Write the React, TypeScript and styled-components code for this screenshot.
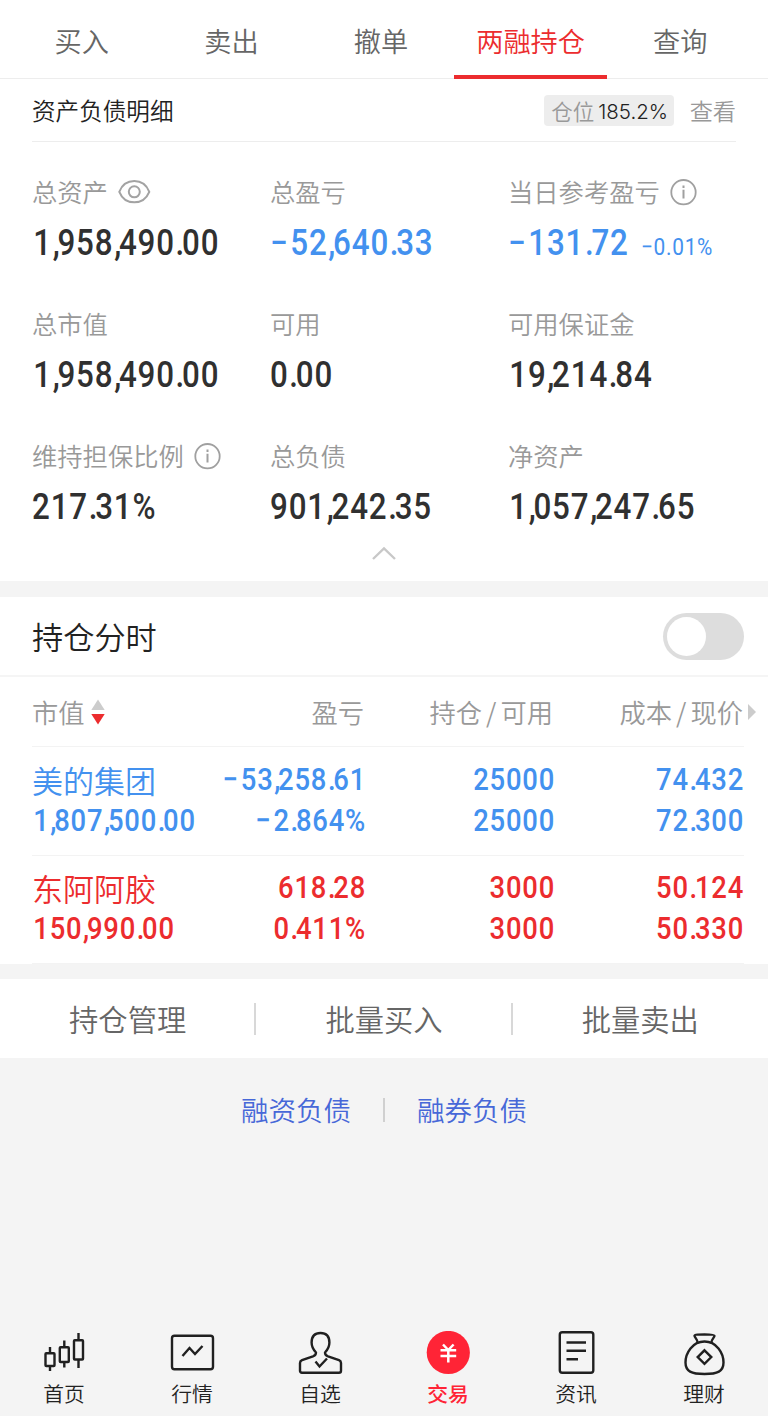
import React from "react";
import styled, { createGlobalStyle } from "styled-components";

const BLUE = "#4391ef";
const RED = "#ec2c2e";
const INK = "#303030";

const GlobalStyle = createGlobalStyle`
  *, *::before, *::after { box-sizing: border-box; }
  body {
    margin: 0;
    background: #f4f4f4;
    font-family: "Noto Sans CJK SC", sans-serif;
    font-weight: 350;
    color: #222;
  }
`;

const Page = styled.div`
  width: 768px;
  height: 1416px;
  display: flex;
  flex-direction: column;
  overflow: hidden;
  white-space: nowrap;
`;

const Tabs = styled.nav`
  height: 79px;
  flex: none;
  display: flex;
  padding: 0 13px 0 7px;
  background: #fff;
  border-bottom: 1px solid #ededed;
`;

const Tab = styled.div<{ $active?: boolean }>`
  position: relative;
  flex: 1;
  height: 79px;
  line-height: 80px;
  text-align: center;
  font-size: 27.2px;
  color: ${(p) => (p.$active ? RED : "#666")};
  &::after {
    content: "";
    display: ${(p) => (p.$active ? "block" : "none")};
    position: absolute;
    left: -2px;
    right: -2px;
    bottom: 0;
    height: 4px;
    background: ${RED};
  }
`;

const Summary = styled.section`
  height: 502px;
  flex: none;
  padding: 0 32px;
  background: #fff;
`;

const SummaryHead = styled.header`
  display: flex;
  align-items: center;
  height: 63px;
  border-bottom: 1px solid #ededed;
`;

const SummaryTitle = styled.h1`
  flex: 1;
  margin: 0;
  font-size: 23.6px;
  font-weight: 350;
  line-height: 32px;
`;

const Badge = styled.span`
  display: flex;
  align-items: center;
  justify-content: center;
  gap: 4px;
  width: 130px;
  height: 31px;
  margin: 1px 16px 0 0;
  padding-left: 2px;
  border-radius: 4px;
  background: #ededed;
  color: #999;
  font-size: 21.5px;
  line-height: 30px;
`;

const BadgeValue = styled.span`
  padding-top: 2px;
  font-family: Inter, sans-serif;
  font-size: 20.5px;
  font-weight: 300;
  color: #222;
`;

const More = styled.span`
  font-size: 23.2px;
  line-height: 32px;
  color: #999;
`;

const Grid = styled.div`
  display: grid;
  grid-template-columns: 238px 238px 1fr;
  grid-auto-rows: 132px;
  padding-top: 30px;
  height: 400px;
`;

const Label = styled.div`
  display: flex;
  align-items: center;
  height: 40px;
  gap: 10px;
  font-size: 25.3px;
  color: #999;
`;

const LabelText = styled.span`
  padding-bottom: 3px;
`;

const Figure = styled.div<{ $color: string }>`
  display: flex;
  align-items: baseline;
  gap: 14px;
  height: 42px;
  margin-top: 10px;
  transform: scaleX(0.87);
  transform-origin: left;
  font-family: Roboto, sans-serif;
  font-size: 36px;
  font-weight: 500;
  line-height: 42px;
  letter-spacing: 1px;
  color: ${(p) => p.$color};
`;

const SubFigure = styled.span`
  font-size: 24px;
  font-weight: 400;
  letter-spacing: 0.8px;
`;

const Separator = styled.span`
  margin-left: 0.8px;
  letter-spacing: -2.6px;
`;

const Minus = styled.span`
  margin-right: 2px;
`;

const Digits = styled.span<{ $inset: boolean }>`
  padding-left: ${(p) => (p.$inset ? "1.5px" : "0")};
`;

const Collapse = styled.div`
  display: flex;
  justify-content: center;
`;

const SwitchRow = styled.section`
  display: flex;
  align-items: center;
  justify-content: space-between;
  flex: none;
  height: 80px;
  margin-top: 16px;
  padding: 0 24px 0 32px;
  background: #fff;
  border-bottom: 2px solid #f5f5f5;
`;

const SwitchLabel = styled.span`
  padding-bottom: 1px;
  font-size: 31.2px;
`;

const Switch = styled.span`
  display: flex;
  align-items: center;
  width: 81px;
  height: 47px;
  padding-left: 4px;
  border-radius: 24px;
  background: #ddd;
`;

const Knob = styled.span`
  width: 39px;
  height: 39px;
  border-radius: 50%;
  background: #fff;
`;

const Holdings = styled.section`
  flex: none;
  height: 287px;
  padding: 0 24px 0 32px;
  background: #fff;
`;

const HoldingsHead = styled.div`
  display: grid;
  grid-template-columns: 160px 172px 190px 190px;
  align-items: center;
  height: 70px;
  border-bottom: 1px solid #f3f3f3;
  color: #999;
  font-size: 26.3px;
`;

const HeadCell = styled.div<{ $right?: boolean }>`
  display: flex;
  align-items: center;
  gap: 6px;
  line-height: 40px;
  position: relative;
  justify-content: ${(p) => (p.$right ? "flex-end" : "flex-start")};
`;

const Pair = styled.span`
  display: flex;
  gap: 4px;
  margin-right: 1px;
`;

const NextArrow = styled.svg`
  position: absolute;
  left: 100%;
  margin-left: 4px;
`;

const HoldingRow = styled.div<{ $color: string; $h: number }>`
  display: grid;
  grid-template-columns: 160px 174px 189px 189px;
  height: ${(p) => p.$h}px;
  padding-top: ${(p) => p.$h - 97}px;
  border-bottom: 1px solid #f3f3f3;
  color: ${(p) => p.$color};
`;

const Name = styled.div`
  height: 41px;
  line-height: 41px;
  font-size: 31px;
`;

const Amount = styled.div<{ $right?: boolean }>`
  height: 41px;
  line-height: 41px;
  font-family: Roboto, sans-serif;
  font-size: 31.5px;
  font-weight: 500;
  letter-spacing: 0.9px;
  text-align: ${(p) => (p.$right ? "right" : "left")};
  transform: scaleX(0.87);
  transform-origin: ${(p) => (p.$right ? "right" : "left")};
`;

const Actions = styled.section`
  display: flex;
  align-items: center;
  flex: none;
  height: 79px;
  margin-top: 15px;
  background: #fff;
`;

const Action = styled.div`
  flex: 1;
  height: 32px;
  line-height: 31px;
  text-align: center;
  font-size: 29.3px;
  color: #666;
  & + & {
    border-left: 2px solid #d8d8d8;
    margin-left: -1px;
  }
`;

const Links = styled.div`
  display: flex;
  justify-content: center;
  align-items: center;
  gap: 32px;
  height: 103px;
  font-size: 27.5px;
  color: #4768d8;
`;

const LinkText = styled.a`
  padding-bottom: 2px;
`;

const Divider = styled.span`
  width: 2px;
  height: 24px;
  background: #d0d0d0;
`;

const BottomNav = styled.nav`
  display: flex;
  margin-top: auto;
  height: 85px;
  flex: none;
`;

const NavItem = styled.div<{ $active?: boolean }>`
  flex: 1;
  display: flex;
  flex-direction: column;
  align-items: center;
  font-size: 20.8px;
  line-height: 30px;
  font-weight: ${(p) => (p.$active ? 500 : 350)};
  color: ${(p) => (p.$active ? "#ff2436" : "#222")};
  svg { display: block; margin-bottom: -1px; }
`;

const Num = ({ value }: { value: string }) => (
  <Digits $inset={value.startsWith("1")}>
    {value.split("").map((c, i) => {
      if (c === "−") return <Minus key={i}>{c}</Minus>;
      return c === "." || c === "," ? <Separator key={i}>{c}</Separator> : c;
    })}
  </Digits>
);

const EyeIcon = () => (
  <svg width="33" height="26" viewBox="0 0 33 26" fill="none" stroke="#a3a3a3" strokeWidth="2">
    <path d="M1.300 12.800C4 6 9.500 2.100 16.300 2.100S28.500 6 31.300 12.800C28.500 19.500 23 23.300 16.300 23.300S4 19.500 1.300 12.800Z" />
    <circle cx="16.300" cy="12.800" r="5.500" />
  </svg>
);

const InfoIcon = () => (
  <svg width="27" height="27" viewBox="0 0 27 27" fill="none" stroke="#a0a0a0" strokeWidth="1.8">
    <circle cx="13.500" cy="13.200" r="12.200" />
    <path d="M13.500 10.700v8.800M13.500 6.500v2.500" strokeWidth="2" />
  </svg>
);

const metrics: {
  label: string;
  value: string;
  color?: string;
  extra?: string;
  icon?: React.ReactNode;
}[] = [
  { label: "总资产", value: "1,958,490.00", icon: <EyeIcon /> },
  { label: "总盈亏", value: "−52,640.33", color: BLUE },
  { label: "当日参考盈亏", value: "−131.72", color: BLUE, extra: "−0.01%", icon: <InfoIcon /> },
  { label: "总市值", value: "1,958,490.00" },
  { label: "可用", value: "0.00" },
  { label: "可用保证金", value: "19,214.84" },
  { label: "维持担保比例", value: "217.31%", icon: <InfoIcon /> },
  { label: "总负债", value: "901,242.35" },
  { label: "净资产", value: "1,057,247.65" },
];

const holdings = [
  {
    name: "美的集团",
    color: BLUE,
    height: 109,
    value: "1,807,500.00",
    pairs: [["−53,258.61", "−2.864%"], ["25000", "25000"], ["74.432", "72.300"]],
  },
  {
    name: "东阿阿胶",
    color: RED,
    height: 108,
    value: "150,990.00",
    pairs: [["618.28", "0.411%"], ["3000", "3000"], ["50.124", "50.330"]],
  },
];

const iconProps = {
  width: 48,
  height: 48,
  viewBox: "0 0 48 48",
  fill: "none",
  stroke: "#202020",
  strokeWidth: 2.4,
};

const navItems = [
  {
    label: "首页",
    icon: (
      <svg {...iconProps}>
        <rect x="5.500" y="22.200" width="9" height="12.800" rx="0.800" />
        <rect x="19.800" y="16.200" width="9" height="14.800" rx="0.800" />
        <rect x="34" y="9.200" width="9" height="19.300" rx="0.800" />
        <path d="M10 16v6M10 35v5M24.300 9.500V16M24.300 31v5.500M38.500 2v7M38.500 28.500v8.500" />
      </svg>
    ),
  },
  {
    label: "行情",
    icon: (
      <svg {...iconProps}>
        <rect x="4" y="4.800" width="41" height="33.400" rx="2.500" />
        <path d="M14.500 25L21.500 17L27 23L34.500 15" />
      </svg>
    ),
  },
  {
    label: "自选",
    icon: (
      <svg {...iconProps}>
        <path
          strokeLinejoin="round"
          d="M20 21.500C17.500 19 15.600 15.600 15.600 11.600C15.600 5 19 2 24.500 2S33.400 5 33.400 11.600C33.400 15.600 31.500 19 29 21.500C29 24.300 30 24.500 32 25.300L43 29.200Q45 30 45 32V39.700Q45 41.700 43 41.700H6Q4 41.700 4 39.700V32Q4 30 6 29.200L17 25.300C19 24.500 20 24.300 20 21.500Z"
        />
        <path d="M19.500 30.500L23.500 35.500L31 27.500" />
      </svg>
    ),
  },
  {
    label: "交易",
    active: true,
    icon: (
      <svg {...iconProps} stroke="#fff">
        <circle cx="24.300" cy="21.500" r="21.600" fill="#ff2436" stroke="none" />
        <path d="M19 13.500L24.300 19L29.600 13.500M24.300 19V31.500M16.500 19.200H32.200M16.500 25H32.200" strokeWidth="2.500" />
      </svg>
    ),
  },
  {
    label: "资讯",
    icon: (
      <svg {...iconProps}>
        <rect x="7.800" y="1.200" width="33.500" height="40.500" rx="2.500" />
        <path d="M14.500 11.500H34M14.500 19.700H34M14.500 28.300H26" />
      </svg>
    ),
  },
  {
    label: "理财",
    icon: (
      <svg {...iconProps}>
        <path d="M17.500 11.500C17.800 8.500 14.500 6.500 14.500 4.800C14.500 3 34.500 3 34.500 4.800C34.500 6.500 31.200 8.500 31.500 11.500" />
        <path d="M24.500 10.500C12.500 10.500 5.500 22 5.500 31.500C5.500 40.500 11.500 43 24.500 43S43.500 40.500 43.500 31.500C43.500 22 36.500 10.500 24.500 10.500Z" />
        <path d="M24.500 19.300L31.300 26.100L24.500 32.900L17.700 26.100Z" />
      </svg>
    ),
  },
];

export default function App() {
  return (
    <Page>
      <GlobalStyle />
      <Tabs>
        {["买入", "卖出", "撤单", "两融持仓", "查询"].map((t) => (
          <Tab key={t} $active={t === "两融持仓"}>{t}</Tab>
        ))}
      </Tabs>

      <Summary>
        <SummaryHead>
          <SummaryTitle>资产负债明细</SummaryTitle>
          <Badge>仓位<BadgeValue>185.2%</BadgeValue></Badge>
          <More>查看</More>
        </SummaryHead>
        <Grid>
          {metrics.map((m) => (
            <div key={m.label}>
              <Label><LabelText>{m.label}</LabelText>{m.icon}</Label>
              <Figure $color={m.color ?? INK}>
                <Num value={m.value} />
                {m.extra && <SubFigure>{m.extra}</SubFigure>}
              </Figure>
            </div>
          ))}
        </Grid>
        <Collapse>
          <svg width="26" height="18" viewBox="0 0 26 18" fill="none" stroke="#c8c8c8" strokeWidth="2.400">
            <path d="M2 17L13 6.500L24 17" />
          </svg>
        </Collapse>
      </Summary>

      <SwitchRow>
        <SwitchLabel>持仓分时</SwitchLabel>
        <Switch><Knob /></Switch>
      </SwitchRow>

      <Holdings>
        <HoldingsHead>
          <HeadCell>
            市值
            <svg width="14" height="26" viewBox="0 0 14 26">
              <path d="M7 0.500L13.700 11H0.300Z" fill="#ccc" />
              <path d="M7 25.500L13.700 15H0.300Z" fill={RED} />
            </svg>
          </HeadCell>
          <HeadCell $right>盈亏</HeadCell>
          <HeadCell $right>
            <Pair><span>持仓</span><span>/</span><span>可用</span></Pair>
          </HeadCell>
          <HeadCell $right>
            <Pair><span>成本</span><span>/</span><span>现价</span></Pair>
            <NextArrow width="8" height="16" viewBox="0 0 8 16">
              <path d="M0 0L8 8L0 16Z" fill="#ccc" />
            </NextArrow>
          </HeadCell>
        </HoldingsHead>
        {holdings.map((h) => (
          <HoldingRow key={h.name} $color={h.color} $h={h.height}>
            <div>
              <Name>{h.name}</Name>
              <Amount><Num value={h.value} /></Amount>
            </div>
            {h.pairs.map(([top, bottom], i) => (
              <div key={i}>
                <Amount $right><Num value={top} /></Amount>
                <Amount $right><Num value={bottom} /></Amount>
              </div>
            ))}
          </HoldingRow>
        ))}
      </Holdings>

      <Actions>
        <Action>持仓管理</Action>
        <Action>批量买入</Action>
        <Action>批量卖出</Action>
      </Actions>

      <Links>
        <LinkText>融资负债</LinkText>
        <Divider />
        <LinkText>融券负债</LinkText>
      </Links>

      <BottomNav>
        {navItems.map((n) => (
          <NavItem key={n.label} $active={n.active}>
            {n.icon}
            {n.label}
          </NavItem>
        ))}
      </BottomNav>
    </Page>
  );
}
